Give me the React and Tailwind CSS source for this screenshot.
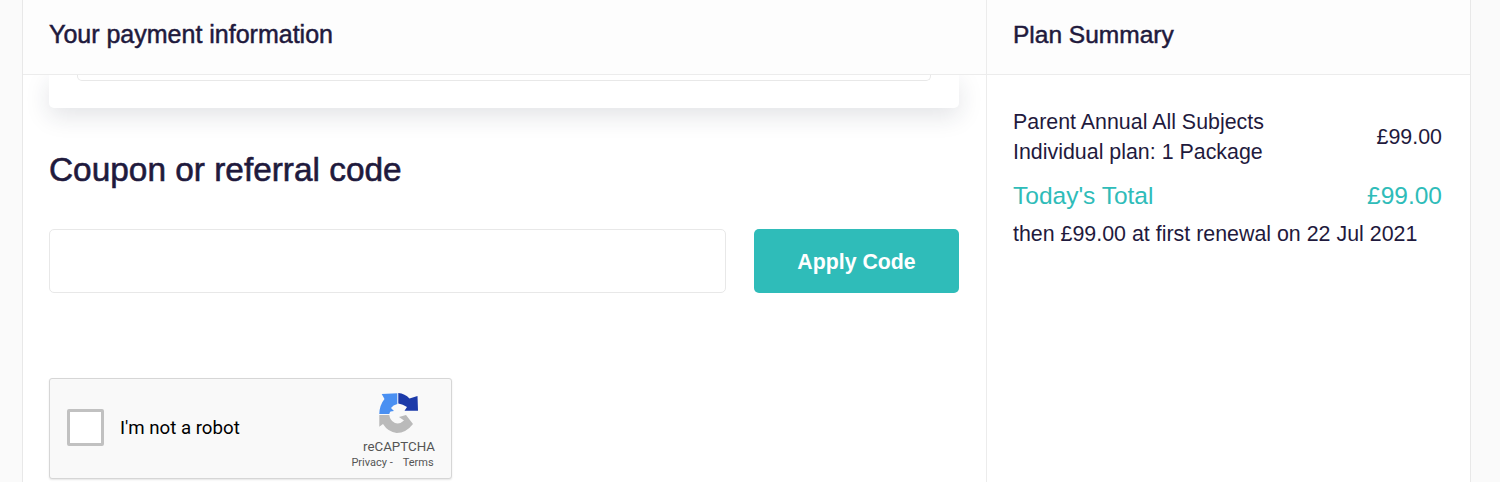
import React from 'react';

const RecaptchaLogo = () => (
    <svg width="40" height="40" viewBox="0 0 40 40" className="block">
        <path d="M3.7 1 L19.3 0.3 L19.3 11 Q15 12 13 15 L16 18 L12.5 18.5 Q11.5 19.5 11.3 21 L1.3 21 Q1.5 12 6.5 6 Z" fill="#4a90f2" />
        <path d="M20.3 0 Q27 0.5 31.5 5.5 L39.5 3 L40 17.7 L26.5 17.7 L29 14 Q25 11 20.3 10.5 Z" fill="#1c3aa9" />
        <path d="M1.3 22 L11.3 22 Q12 27.5 17 30 Q22 31.5 26 27.5 L21 24 L28 22 L35 31 Q28 40 18.7 40 Q10 39 5 31 L1.3 33.7 Z" fill="#bababa" />
    </svg>
);

const App = () => {
    return (
        <div className="w-[1500px] h-[482px] overflow-hidden bg-[#fafafa] pl-[22px] font-['Liberation_Sans',Arial,sans-serif] text-[#1f1a3d]">
            <div className="w-[1449px] h-[482px] bg-white border-x border-[#e8e8e8]">
                <div className="relative z-10 flex h-[75px] bg-[#fdfdfd] border-b border-[#ececec]">
                    <div className="w-[963px] pl-[26px] pt-[19px] text-[25px] leading-[30px] [-webkit-text-stroke:0.5px_#1f1a3d]">
                        Your payment information
                    </div>
                    <div className="flex-1 border-l border-[#ececec] pl-[26px] pt-[19px] text-[24.5px] leading-[31px] [-webkit-text-stroke:0.5px_#1f1a3d]">
                        Plan Summary
                    </div>
                </div>
                <div className="flex h-[407px]">
                    <div className="w-[963px] pl-[26px] pr-[27px]">
                        <div className="h-[33px] bg-white rounded-b-[5px] px-[28px] shadow-[0_8px_24px_rgba(30,35,60,0.13)]">
                            <div className="h-[6px] border-x border-b border-[#e8e8e8] rounded-b-[5px]" />
                        </div>
                        <h2 className="mt-[44px] text-[33.4px] leading-[36px] [-webkit-text-stroke:0.6px_#1f1a3d]">Coupon or referral code</h2>
                        <div className="mt-[41px] flex gap-[28px]">
                            <input className="w-[677px] h-[64px] bg-white border border-[#e8e8e8] rounded-[5px]" />
                            <button className="w-[205px] h-[64px] pt-[3px] bg-[#2fbcb9] rounded-[5px] text-white text-[21.3px] font-bold">Apply Code</button>
                        </div>
                        <div className="mt-[85px] w-[403px] h-[101px] flex items-center bg-[#f9f9f9] border border-[#d6d6d6] rounded-[3px] shadow-[0_1px_2px_rgba(0,0,0,0.1)] font-['Roboto',sans-serif] text-black">
                            <div className="ml-[17px] mb-[3px] w-[37px] h-[37px] bg-white border-[3px] border-[#c1c1c1] rounded-[2px]" />
                            <span className="ml-[16px] mb-[1px] text-[18.7px]">I'm not a robot</span>
                            <div className="ml-auto w-[100px] mr-[14px] flex flex-col items-center text-[#555]">
                                <div className="mt-[6px] ml-[21px]"><RecaptchaLogo /></div>
                                <div className="mt-[5px] ml-[24px] text-[13.3px] leading-[18px]">reCAPTCHA</div>
                                <div className="flex ml-[11px] gap-[10px] text-[11px] leading-[14px]">
                                    <span>Privacy -</span>
                                    <span>Terms</span>
                                </div>
                            </div>
                        </div>
                    </div>
                    <div className="flex-1 border-l border-[#ececec] pl-[26px] pr-[28px] pt-[32px]">
                        <div className="flex items-center justify-between text-[21.4px] leading-[30px]">
                            <div>
                                <div>Parent Annual All Subjects</div>
                                <div>Individual plan: 1 Package</div>
                            </div>
                            <div>£99.00</div>
                        </div>
                        <div className="mt-[14px] flex justify-between text-[24.5px] leading-[30px] text-[#2fbcb9]">
                            <span>Today's Total</span>
                            <span>£99.00</span>
                        </div>
                        <div className="mt-[8px] text-[21.4px] leading-[30px]">then £99.00 at first renewal on 22 Jul 2021</div>
                    </div>
                </div>
            </div>
        </div>
    );
};

export default App;
